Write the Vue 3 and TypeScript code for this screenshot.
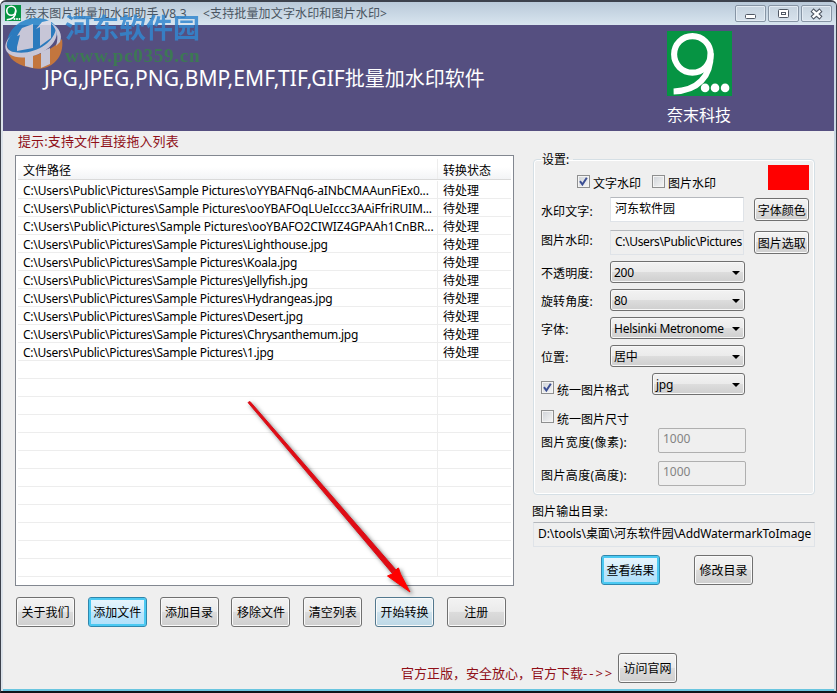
<script setup lang="ts">
import { ref } from 'vue'

interface FileRow { path: string; cls: string }

const base = 'C:\\Users\\Public\\Pictures\\Sample Pictures\\'
const files: FileRow[] = [
  { path: base + 'oYYBAFNq6-aINbCMAAunFiEx0...', cls: 'f0' },
  { path: base + 'ooYBAFOqLUeIccc3AAiFfriRUIM...', cls: 'f1' },
  { path: base + 'ooYBAFO2CIWIZ4GPAAh1CnBR...', cls: 'f2' },
  { path: base + 'Lighthouse.jpg', cls: '' },
  { path: base + 'Koala.jpg', cls: '' },
  { path: base + 'Jellyfish.jpg', cls: '' },
  { path: base + 'Hydrangeas.jpg', cls: '' },
  { path: base + 'Desert.jpg', cls: '' },
  { path: base + 'Chrysanthemum.jpg', cls: '' },
  { path: base + '1.jpg', cls: '' },
]
const blanks = 12
const actions = [
  { text: '关于我们', kind: '' },
  { text: '添加文件', kind: 'active' },
  { text: '添加目录', kind: '' },
  { text: '移除文件', kind: '' },
  { text: '清空列表', kind: '' },
  { text: '开始转换', kind: 'hover' },
  { text: '注册', kind: '' },
]
const selects = [
  { label: '不透明度:', value: '200' },
  { label: '旋转角度:', value: '80' },
  { label: '字体:', value: 'Helsinki Metronome' },
  { label: '位置:', value: '居中' },
]
const sizes = [
  { label: '图片宽度(像素):', value: '1000' },
  { label: '图片高度(高度):', value: '1000' },
]
const textMark = ref(true)
const imageMark = ref(false)
const sameFormat = ref(true)
const sameSize = ref(false)
</script>

<template>
  <div class="window">
    <header class="titlebar">
      <svg class="app-icon" viewBox="0 0 64 64">
        <rect width="64" height="64" fill="#069443" />
        <circle cx="25" cy="23" r="18" fill="none" stroke="#fff" stroke-width="6.5" />
        <path d="M43 22C43 46 30 58 7 59" fill="none" stroke="#fff" stroke-width="6.5" />
        <g fill="#fff"><circle cx="38" cy="56" r="4" /><circle cx="48" cy="56" r="4" /><circle cx="58" cy="56" r="4" /></g>
      </svg>
      <span class="title">奈末图片批量加水印助手 V8.3</span>
      <span class="subtitle">&lt;支持批量加文字水印和图片水印&gt;</span>
      <div class="controls">
        <button class="ctl"><svg viewBox="0 0 29 15"><rect x="9.500" y="8.500" width="10" height="4" rx="1" fill="#fff" stroke="#505864" /></svg></button>
        <button class="ctl"><svg viewBox="0 0 29 15"><rect x="9.500" y="3.500" width="10" height="8" rx="1" fill="#fff" stroke="#505864" /><rect x="12.500" y="6.500" width="4" height="2" fill="#fff" stroke="#505864" /></svg></button>
        <button class="ctl"><svg viewBox="0 0 29 15"><path d="M10 4 19 12M19 4 10 12" stroke="#505864" stroke-width="4.600" /><path d="M10.700 4.600 18.300 11.400M18.300 4.600 10.700 11.400" stroke="#fff" stroke-width="2.400" /></svg></button>
      </div>
    </header>

    <section class="banner">
      <h1><span>JPG,JPEG,PNG,BMP,EMF,TIF,GIF</span>批量加水印软件</h1>
      <div class="brand">
        <svg class="brand-logo" viewBox="0 0 64 64">
          <rect width="64" height="64" fill="#069443" />
          <circle cx="25" cy="23" r="18" fill="none" stroke="#fff" stroke-width="6" />
          <path d="M43 22C43.500 45 30 59 6.500 59.500" fill="none" stroke="#fff" stroke-width="6" />
          <g fill="#fff"><circle cx="37.500" cy="56" r="4.200" /><circle cx="47.300" cy="56" r="4.200" /><circle cx="57.200" cy="56" r="4.200" /></g>
        </svg>
        <span>奈末科技</span>
      </div>
    </section>

    <main class="body">
      <section class="left">
        <p class="hint">提示:支持文件直接拖入列表</p>
        <div class="list">
          <div class="row head"><span class="path">文件路径</span><span class="state">转换状态</span></div>
          <div v-for="f in files" :key="f.path" class="row">
            <span class="path"><span class="name" :class="f.cls">{{ f.path }}</span></span><span class="state">待处理</span>
          </div>
          <div v-for="n in blanks" :key="n" class="row"><span class="path"></span><span class="state"></span></div>
        </div>
        <div class="actions">
          <button v-for="a in actions" :key="a.text" class="btn" :class="a.kind">{{ a.text }}</button>
        </div>
      </section>

      <section class="right">
        <fieldset class="group">
          <legend>设置:</legend>
          <div class="line marks">
            <label class="check"><i class="box"><svg v-if="textMark" viewBox="0 0 11 11"><path d="M2 5.200 4.400 8.500 8.800 1.800" /></svg></i>文字水印</label>
            <label class="check second"><i class="box"><svg v-if="imageMark" viewBox="0 0 11 11"><path d="M2 5.200 4.400 8.500 8.800 1.800" /></svg></i>图片水印</label>
            <span class="swatch"></span>
          </div>
          <div class="line text-line"><span class="label">水印文字:</span><div class="field white">河东软件园</div><button class="btn small">字体颜色</button></div>
          <div class="line image-line"><span class="label">图片水印:</span><div class="field path-field">C:\Users\Public\Pictures</div><button class="btn small">图片选取</button></div>
          <div v-for="s in selects" :key="s.label" class="line select-line">
            <span class="label">{{ s.label }}</span>
            <div class="select"><span>{{ s.value }}</span><i class="arrow"></i></div>
          </div>
          <div class="line format-line">
            <label class="check"><i class="box"><svg v-if="sameFormat" viewBox="0 0 11 11"><path d="M2 5.200 4.400 8.500 8.800 1.800" /></svg></i>统一图片格式</label>
            <div class="select narrow"><span>jpg</span><i class="arrow"></i></div>
          </div>
          <div class="line size-line">
            <label class="check"><i class="box"><svg v-if="sameSize" viewBox="0 0 11 11"><path d="M2 5.200 4.400 8.500 8.800 1.800" /></svg></i>统一图片尺寸</label>
          </div>
          <div v-for="s in sizes" :key="s.label" class="line dim-line">
            <span class="label">{{ s.label }}</span><div class="number">{{ s.value }}</div>
          </div>
        </fieldset>
        <p class="out-label">图片输出目录:</p>
        <div class="field out-field">D:\tools\桌面\河东软件园\AddWatermarkToImage</div>
        <div class="out-actions"><button class="btn active">查看结果</button><button class="btn">修改目录</button></div>
      </section>
    </main>

    <footer class="foot"><span>官方正版，安全放心，官方下载<b>--&gt;&gt;</b></span><button class="btn">访问官网</button></footer>

    <svg class="pointer" viewBox="0 0 200 220">
      <path d="M18 12.500 20 11.500 166 180 162 183Z" fill="#e00c14" stroke="#d8101c" stroke-linejoin="round" />
      <path d="M180 202 157.500 186 162 184 168 178 168.500 178 170.500 184Z" fill="#f00" stroke="#f00" />
    </svg>

    <div class="watermark">
      <svg class="wm-logo" viewBox="0 0 60 64">
        <path d="M3 35C3 8 42 -2 55 20C40 22 18 36 3 35Z" fill="#2482c8" />
        <path d="M3 35C5 48 28 46 42 36C50 31 54 25 55 19Q28 17 3 35Z" fill="#2482c8" />
        <path d="M4 43C20 52 45 44 58 29C61 50 44 62 28 58C16 56 7 51 4 43Z" fill="#d77d33" />
        <path d="M13 37 16 25 13 26 18 18 29 14V38L13 41ZM36 31V17L32 19 38 12 47 10V28L36 36ZM21 45 29 44V58L21 56ZM37 42 46 38V54L37 58Z" fill="#dcdbe7" />
        <path d="M9 24C1 31 0 40 10 42C30 46 51 32 52 18C56 31 43 42 29 46C10 51-5 43 4 29Z" fill="#dcdbe7" />
        <path d="M47 13C55 17 59 25 56 32L52 36C55 26 53 20 47 13Z" fill="#dcdbe7" />
      </svg>
      <div class="wm-text"><strong>河东软件园</strong><em>www.pc0359.cn</em></div>
    </div>
  </div>
</template>

<style>
body { margin: 0; overflow: hidden; }
</style>

<style scoped>
* { box-sizing: border-box; }
.window { position: relative; width: 837px; height: 693px; overflow: hidden; background: #efefef; border: solid #3c414c; border-width: 2px 1px 2px 1px; border-bottom-color: #10161c; border-radius: 6px 6px 0 0; box-shadow: inset 2px 0 #dbe2ea, inset -2px 0 #c9d8e3, inset 0 -2px #69c5df; font: 12px/18px "Noto Sans", "Noto Sans CJK SC", sans-serif; color: #000; }
p, h1 { margin: 0; font-weight: 400; }
button { font: inherit; color: inherit; padding: 0; }
.titlebar { display: flex; height: 23px; padding: 0 4px; background: linear-gradient(#b9c9d9, #d8e5ef); color: #4a5561; }
.app-icon { width: 16px; height: 16px; margin: 3px 4px 0 0; }
.title, .subtitle { margin-top: 3px; white-space: pre; }
.title { width: 178px; letter-spacing: .15px; }
.subtitle { letter-spacing: .15px; }
.controls { display: flex; gap: 2px; margin: 3px 0 0 auto; }
.ctl { width: 31px; height: 17px; border: 1px solid #8795a5; border-radius: 2px; background: linear-gradient(#c6d3df, #d7e2ec); box-shadow: inset 0 0 0 1px #e3ebf3; }
.ctl svg { display: block; width: 29px; height: 15px; }
.banner { display: flex; justify-content: space-between; height: 106px; margin: 0 2px; padding: 5px 102px 0 41px; background: #554f80; color: #fff; }
.banner h1 { margin-top: 34px; font-size: 20px; line-height: 28px; white-space: nowrap; }
.banner h1 span { font-size: 21px; letter-spacing: .06px; }
.brand { width: 65px; display: flex; flex-direction: column; font-size: 16px; line-height: 24px; white-space: nowrap; }
.brand-logo { width: 65px; height: 65px; margin: 1px 0 7px; }
.body { display: flex; height: 513px; padding: 0 20px 0 14px; }
.left { width: 499px; }
.hint { height: 24px; padding: 1px 0 0 3px; font-size: 13px; letter-spacing: .1px; color: #901018; }
.list { height: 431px; padding: 1px 2px; border: 1px solid #828790; background: #fff; }
.row { display: flex; height: 18px; border-bottom: 1px solid #ededed; white-space: nowrap; line-height: 20px; }
.row.head { height: 23px; margin-bottom: 1px; padding-top: 2px; line-height: 23px; background: linear-gradient(#fff 45%, #f3f4f6); border-color: #dadada; }
.path { width: 420px; padding-left: 5px; border-right: 1px solid #ededed; }
.name { letter-spacing: -.25px; }
.f0 { letter-spacing: -.19px; }
.f1 { letter-spacing: -.18px; }
.f2 { letter-spacing: -.125px; }
.state { padding-left: 5px; }
.actions { display: grid; grid-template-columns: repeat(7, 59px); gap: 12.8px; padding: 11px 0 0 1px; }
.btn { width: 59px; height: 30px; padding-top: 2px; border: 1px solid #707070; border-radius: 3px; background: linear-gradient(#f3f3f3 0, #ebebeb 48%, #dcdcdc 50%, #cfcfcf); box-shadow: inset 0 0 0 1px #fafafa; white-space: nowrap; }
.btn.active { border-color: #2f87ad; background: linear-gradient(#eaf6fd, #d2edfc 48%, #bde6fd 50%, #b2e0f9); box-shadow: inset 0 0 0 2px #4bc9f2; }
.btn.hover { border-color: #52788e; background: linear-gradient(#edf3f6, #e3eff5 48%, #cfe3ee 50%, #bdd8e6); }
.right { width: 282px; margin-left: 19px; }
.group { height: 345px; margin: 19px 0 0; padding: 0 5px 0 7px; border: 1px solid #d5dfe5; border-radius: 4px; box-shadow: inset 0 0 0 1px #fff; min-width: 0; }
legend { height: 18px; padding: 1px 4px 0 1px; line-height: 18px; }
.line { display: flex; align-items: flex-start; white-space: nowrap; }
.label { width: 69px; flex: none; letter-spacing: .1px; }
.check { display: flex; }
.box { flex: none; width: 13px; height: 13px; margin: 0 3px 0 0; border: 1px solid #8e8f8f; background: linear-gradient(135deg, #cfd3d8, #f6f6f6); box-shadow: inset 0 0 0 1px #f4f4f4; }
.box svg { display: block; width: 11px; height: 11px; fill: none; stroke: #3c4f94; stroke-width: 2; }
.marks { height: 29px; padding-left: 36px; }
.marks .check { margin-top: 7px; line-height: 18px; }
.marks .second { margin-left: 11px; }
.swatch { width: 41px; height: 25px; margin: -3px 0 0 auto; background: red; }
.field { width: 135px; height: 25px; padding: 2px 4px; border: 1px solid #dfe3e8; border-top-color: #b5b8bd; line-height: 17px; overflow: hidden; white-space: nowrap; }
.field.white { background: #fff; }
.path-field { letter-spacing: -.35px; }
.btn.small { width: 55px; height: 23px; margin: 1px 0 0 10px; line-height: 20px; }
.text-line { height: 33px; }
.text-line .label { padding-top: 6px; }
.image-line { height: 31px; }
.image-line .label { padding-top: 2px; }
.select-line { height: 28px; }
.select-line .label { padding-top: 4px; }
.select { display: flex; align-items: center; justify-content: space-between; width: 135px; height: 22px; padding: 1px 4px 0 3px; border: 1px solid #707070; border-radius: 3px; background: linear-gradient(#f2f2f2, #ebebeb 48%, #dddddd 50%, #cfcfcf); box-shadow: inset 0 0 0 1px #f8f8f8; letter-spacing: -.25px; }
.arrow { border: solid transparent; border-width: 4px 4px 0; border-top-color: #000; }
.format-line { height: 37px; justify-content: space-between; padding-right: 64px; }
.format-line .check, .size-line .check { line-height: 19px; }
.format-line .check { margin-top: 8px; }
.narrow { width: 93px; }
.size-line { height: 18px; }
.dim-line { height: 33px; }
.dim-line .label { width: 117px; padding-top: 6px; letter-spacing: .4px; }
.number { width: 88px; height: 25px; padding: 1px 4px; border: 1px solid #afafaf; border-radius: 2px; color: #838383; }
.out-label { height: 27px; padding-top: 8px; margin-left: -1px; letter-spacing: .1px; }
.out-field { width: 282px; letter-spacing: -.08px; }
.out-actions { display: flex; gap: 34px; padding: 8px 0 0 68px; }
.foot { display: flex; align-items: center; height: 48px; padding-left: 400px; gap: 4px; color: #901018; font-size: 13px; white-space: nowrap; }
.foot span { width: 213px; margin-top: 9px; }
.foot b { font-weight: 400; letter-spacing: 2px; }
.foot .btn { color: #000; font-size: 12px; }
.pointer { position: absolute; left: 229px; top: 388px; width: 200px; height: 220px; filter: drop-shadow(2px 2px 2px rgba(0, 0, 0, .55)); fill: none; }
.watermark { position: absolute; left: 3px; top: 8px; display: flex; opacity: .85; }
.wm-logo { width: 60px; height: 64px; }
.wm-text { display: flex; flex-direction: column; width: 140px; white-space: nowrap; padding-left: 1px; }
.wm-text strong { font-size: 27px; line-height: 36px; color: #3287cf; }
.wm-text em { font: bold 19px/20px "Liberation Serif", serif; letter-spacing: .75px; color: #39804d; }
</style>
